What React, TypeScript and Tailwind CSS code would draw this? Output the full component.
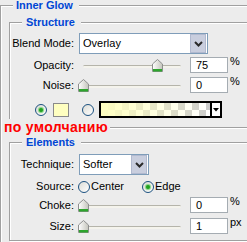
import React from "react";

function Thumb() {
  return (
    <svg width="11" height="13" viewBox="0 0 11 13" className="block">
      <defs>
        <linearGradient id="thumbg" x1="0" y1="0" x2="1" y2="0">
          <stop offset="0" stopColor="#ffffff" />
          <stop offset="1" stopColor="#c4c4bc" />
        </linearGradient>
      </defs>
      <path d="M0.5 5 L5.5 0.5 L10.5 5 L10.5 12.5 L0.5 12.5 Z" fill="url(#thumbg)" stroke="#8e8f8f" />
      <rect x="1" y="10" width="9" height="2.5" fill="#2ea52e" />
    </svg>
  );
}

function Slider({ value }: { value: number }) {
  const left = 4 + (value / 100) * 98 - 5;
  return (
    <div className="relative w-[111px] h-[16px] shrink-0">
      <div className="absolute left-[4px] right-[9px] top-[8px] h-[3px] rounded-full border-t border-[#b5b4aa] bg-[#f4f3ec]" />
      <div className="absolute top-[2px]" style={{ left }}>
        <Thumb />
      </div>
    </div>
  );
}

function Radio({ checked }: { checked?: boolean }) {
  return (
    <div className="w-[12px] h-[12px] shrink-0 rounded-full border border-[#1c5180] bg-[linear-gradient(135deg,#dcdcd6,#ffffff)] flex items-center justify-center">
      {checked && <div className="w-[4px] h-[4px] rounded-full bg-[#21a121] shadow-[0_0_1px_1px_#7ed37e]" />}
    </div>
  );
}

function Chevron() {
  return (
    <svg width="9" height="6" viewBox="0 0 9 6">
      <path d="M1 1 L4.5 4.5 L8 1" fill="none" stroke="#2a2a2a" strokeWidth="2" />
    </svg>
  );
}

function Select({ text, width }: { text: string; width: string }) {
  return (
    <div className={`${width} h-[21px] border border-[#7f9db9] bg-white flex items-center shrink-0`}>
      <span className="flex-1 pl-[3px] text-[11px] leading-[13px]">{text}</span>
      <div className="w-[16px] h-[19px] mr-px bg-[#c9cede] border border-[#b1b9cf] flex items-center justify-center">
        <Chevron />
      </div>
    </div>
  );
}

function NumInput({ v }: { v: string }) {
  return (
    <div className="w-[38px] h-[16px] border border-[#a5acb2] bg-white shrink-0 pl-[5px] text-[11px] leading-[14px]">{v}</div>
  );
}

function Label({ children }: { children: React.ReactNode }) {
  return <div className="w-[64px] shrink-0 text-right text-[11px] leading-[13px]">{children}</div>;
}

function SliderRow({ label, value, v, unit, mt }: { label: string; value: number; v: string; unit: string; mt: string }) {
  return (
    <div className={`${mt} flex items-center h-[16px]`}>
      <Label>{label}</Label>
      <div className="w-[5px]" />
      <Slider value={value} />
      <NumInput v={v} />
      <span className="self-start ml-[2px] -mt-[1px] text-[11px] leading-[11px]">{unit}</span>
    </div>
  );
}

export default function App() {
  return (
    <div className="relative w-[247px] h-[242px] overflow-hidden bg-[#ECECEC] text-black font-['Liberation_Sans',Arial,sans-serif]">
      <fieldset className="w-[280px] h-[260px] border border-[#a0a0a0] shadow-[inset_1px_1px_0_#ffffff]">
        <legend className="ml-[12px] pl-[3px] pr-[6px] bg-[#ECECEC] text-[11px] leading-[11px] font-bold text-[#0046d5]">Inner Glow</legend>

        <fieldset className="ml-[8px] mt-[6px] w-[270px] border border-[#a0a0a0] shadow-[inset_1px_1px_0_#ffffff,1px_1px_0_#ffffff] pb-[9px]">
          <legend className="ml-[12px] pl-[4px] pr-[6px] bg-[#ECECEC] text-[11px] leading-[11px] font-bold text-[#0046d5]">Structure</legend>
          <div className="mt-[5px] flex items-center h-[21px]">
            <Label>Blend Mode:</Label>
            <div className="w-[5px]" />
            <Select text="Overlay" width="w-[129px]" />
          </div>
          <SliderRow label="Opacity:" value={75} v="75" unit="%" mt="mt-[3px]" />
          <SliderRow label="Noise:" value={0} v="0" unit="%" mt="mt-[4px]" />
          <div className="mt-[8px] h-[17px] flex items-center pl-[25px]">
            <Radio checked />
            <div className="ml-[6px] w-[16px] h-[14px] border border-[#8a8a8a] bg-[#ffffc0]" />
            <div className="ml-[13px]"><Radio /></div>
            <div className="ml-[5px] w-[123px] h-[17px] border-2 border-black flex">
              <div className="flex-1 bg-[linear-gradient(to_right,#ffffc0,rgba(255,255,192,0)),repeating-conic-gradient(#cccccc_0%_25%,#ffffff_0%_50%)] bg-[length:100%_100%,14px_14px]" />
              <div className="w-[10px] border-l-2 border-black bg-white flex items-center justify-center">
                <svg width="6" height="4" viewBox="0 0 6 4"><path d="M0 0 H6 L3 3.5 Z" fill="#000" /></svg>
              </div>
            </div>
          </div>
        </fieldset>

        <fieldset className="ml-[8px] mt-[9px] w-[270px] border border-[#a0a0a0] shadow-[inset_1px_1px_0_#ffffff,1px_1px_0_#ffffff] pb-[6px]">
          <legend className="ml-[12px] pl-[4px] pr-[6px] bg-[#ECECEC] text-[11px] leading-[11px] font-bold text-[#0046d5]">Elements</legend>
          <div className="mt-[6px] flex items-center h-[21px]">
            <Label>Technique:</Label>
            <div className="w-[5px]" />
            <Select text="Softer" width="w-[70px]" />
          </div>
          <div className="mt-[5px] h-[13px] flex items-center">
            <Label>Source:</Label>
            <div className="w-[4px]" />
            <Radio />
            <span className="ml-[1px] text-[11px] leading-[13px]">Center</span>
            <div className="ml-[18px]"><Radio checked /></div>
            <span className="ml-[1px] text-[11px] leading-[13px]">Edge</span>
          </div>
          <SliderRow label="Choke:" value={0} v="0" unit="%" mt="mt-[4px]" />
          <SliderRow label="Size:" value={0} v="1" unit="px" mt="mt-[5px]" />
        </fieldset>
      </fieldset>

      <div className="absolute left-[2px] top-[119px] pl-[2px] pr-[2px] bg-[#ECECEC] text-[14px] leading-[17px] tracking-[0.3px] font-bold text-[#ff0000]">по умолчанию</div>
    </div>
  );
}
